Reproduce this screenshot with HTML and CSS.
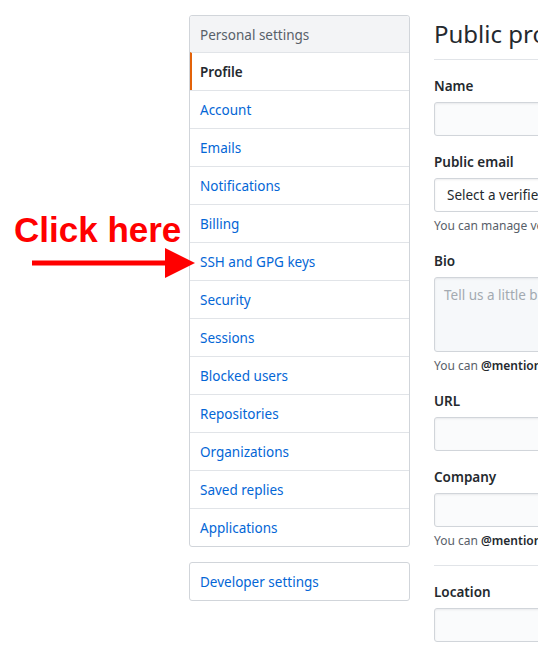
FILE: index.html
```html
<!DOCTYPE html>
<html>
<head>
<meta charset="utf-8">
<link rel="stylesheet" href="styles.css">
</head>
<body>
<div class="page">
  <div class="annotation">
    <div class="callout">Click here</div>
    <svg class="arrow" width="200" height="40" viewBox="0 0 200 40">
      <line x1="32" y1="17" x2="168" y2="17" stroke="#ff0000" stroke-width="5"/>
      <polygon points="165,2 195,17 165,32" fill="#ff0000"/>
    </svg>
  </div>
  <nav class="sidebar">
    <div class="menu">
      <div class="menu-heading">Personal settings</div>
      <a class="menu-item selected">Profile</a>
      <a class="menu-item">Account</a>
      <a class="menu-item">Emails</a>
      <a class="menu-item">Notifications</a>
      <a class="menu-item">Billing</a>
      <a class="menu-item">SSH and GPG keys</a>
      <a class="menu-item">Security</a>
      <a class="menu-item">Sessions</a>
      <a class="menu-item">Blocked users</a>
      <a class="menu-item">Repositories</a>
      <a class="menu-item">Organizations</a>
      <a class="menu-item">Saved replies</a>
      <a class="menu-item">Applications</a>
    </div>
    <div class="menu">
      <a class="menu-item first">Developer settings</a>
    </div>
  </nav>
  <main class="main">
    <div class="subhead">Public profile</div>
    <div class="group">
      <label class="label">Name</label>
      <div class="input"></div>
    </div>
    <div class="group">
      <label class="label">Public email</label>
      <div class="input select">Select a verified email to display</div>
      <p class="note">You can manage verified email addresses in your email settings.</p>
    </div>
    <div class="group">
      <label class="label">Bio</label>
      <div class="input textarea">Tell us a little bit about yourself</div>
      <p class="note">You can <b>@mention</b> other users and organizations to link to them.</p>
    </div>
    <div class="group">
      <label class="label">URL</label>
      <div class="input"></div>
    </div>
    <div class="group">
      <label class="label">Company</label>
      <div class="input"></div>
      <p class="note">You can <b>@mention</b> your company's GitHub organization to link it.</p>
    </div>
    <hr class="divider">
    <div class="group">
      <label class="label">Location</label>
      <div class="input"></div>
    </div>
  </main>
</div>
</body>
</html>
```
FILE: styles.css
```css
html, body {
  margin: 0;
  padding: 0;
  overflow: hidden;
  background: #ffffff;
}
body {
  font-family: "Noto Sans", "Open Sans", sans-serif;
  font-size: 14px;
  color: #24292e;
  width: 538px;
  height: 654px;
}
.page {
  position: relative;
  display: flex;
  align-items: flex-start;
  padding: 15px 0 0 189px;
  gap: 24px;
  width: 900px;
}
.annotation {
  position: absolute;
  left: 0;
  top: 0;
  width: 200px;
  height: 300px;
}
.callout {
  position: absolute;
  left: 14px;
  top: 213px;
  font-family: "Liberation Sans", Arial, sans-serif;
  font-weight: bold;
  font-size: 35px;
  line-height: 34px;
  color: #ff0000;
  white-space: nowrap;
}
.arrow {
  position: absolute;
  left: 0;
  top: 246px;
}
.sidebar {
  width: 221px;
  flex: none;
  display: flex;
  flex-direction: column;
  gap: 15px;
}
.menu {
  border: 1px solid #d1d5da;
  border-radius: 3px;
  display: flex;
  flex-direction: column;
}
.menu-heading {
  height: 35px;
  line-height: 37px;
  padding: 1px 10px 0 10px;
  background: #f3f4f6;
  color: #586069;
  font-size: 13.5px;
  border-radius: 3px 3px 0 0;
}
.menu-item {
  display: block;
  height: 36px;
  line-height: 37px;
  padding: 1px 10px 0 10px;
  border-top: 1px solid #e1e4e8;
  color: #0366d6;
  font-size: 13.5px;
}
.menu-item.first {
  border-top: none;
}
.menu-item.selected {
  color: #24292e;
  font-weight: 600;
  border-left: 2px solid #e36209;
  padding-left: 8px;
}
.main {
  width: 440px;
  flex: none;
  padding-top: 1px;
}
.subhead {
  font-size: 24px;
  line-height: 36px;
  padding-bottom: 7px;
  border-bottom: 1px solid #e1e4e8;
  margin-bottom: 16px;
  white-space: nowrap;
}
.group {
  margin-bottom: 16px;
}
.label {
  display: block;
  font-weight: 600;
  font-size: 13.5px;
  line-height: 21px;
  margin-bottom: 5px;
}
.input {
  box-sizing: border-box;
  height: 34px;
  border: 1px solid #d1d5da;
  border-radius: 3px;
  background: #fafbfc;
  box-shadow: inset 0 1px 2px rgba(27, 31, 35, 0.075);
  font-size: 13.5px;
  line-height: 32px;
  padding: 0 12px;
  white-space: nowrap;
}
.select {
  background: #ffffff;
  color: #24292e;
}
.textarea {
  height: 75px;
  line-height: 20px;
  padding: 7px 9px;
  color: #a3aab1;
  background: #f6f8fa;
}
.note {
  margin: 5px 0 0 0;
  font-size: 12px;
  line-height: 18px;
  color: #586069;
  white-space: nowrap;
}
.note b {
  color: #24292e;
  font-weight: 600;
}
.divider {
  border: none;
  border-top: 1px solid #e1e4e8;
  margin: -1px 0 16px 0;
}
```
